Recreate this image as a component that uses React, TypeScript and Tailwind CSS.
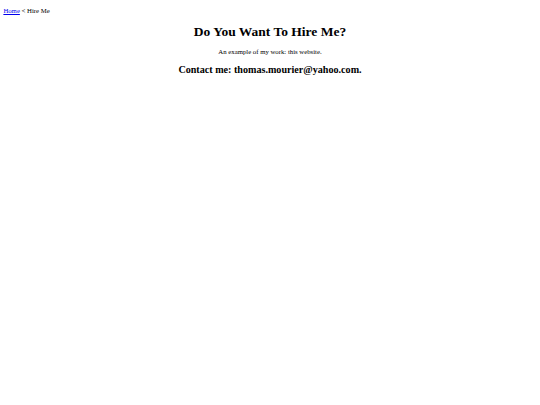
export default function App() {
  return (
    <div
      className="min-h-[405px] w-full bg-white px-[3.375px] pt-[6.75px] text-black"
      style={{ fontFamily: '"Liberation Serif", "Times New Roman", serif' }}
    >
      <div className="text-[6.75px] leading-[7.76px]">
        <a href="#" className="text-[#0000ee] underline">Home</a>
        <span> &lt; Hire Me</span>
      </div>
      <h1 className="mt-[9.05px] text-center text-[13.5px] font-bold leading-[15.5px]">Do You Want To Hire Me?</h1>
      <p className="mt-[9.05px] text-center text-[6.75px] leading-[7.76px]">An example of my work: this website.</p>
      <h2 className="mt-[8.4px] text-center text-[10.125px] font-bold leading-[11.6px]">Contact me: thomas.mourier@yahoo.com.</h2>
    </div>
  );
}
